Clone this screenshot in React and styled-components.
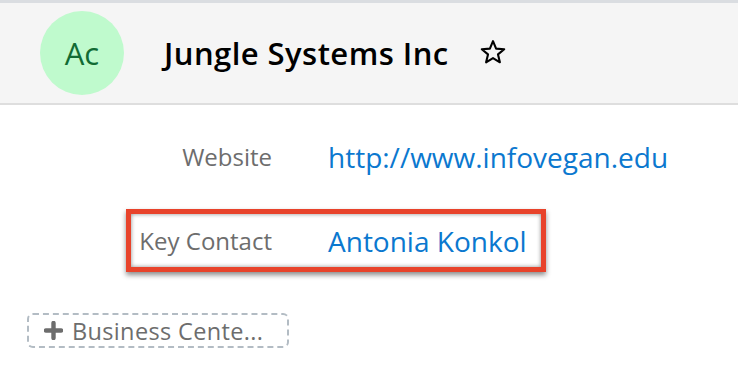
import React from "react";
import styled, { createGlobalStyle } from "styled-components";

const GlobalStyle = createGlobalStyle`
  body {
    margin: 0;
    background: #ffffff;
    font-family: "Open Sans", "Liberation Sans", sans-serif;
  }
`;

const Page = styled.div`
  width: 738px;
  height: 374px;
  overflow: hidden;
  background: #fff;
`;

const Header = styled.header`
  height: 100px;
  display: flex;
  align-items: center;
  padding-left: 40px;
  background: #f5f5f5;
  border-top: 3px solid #dadde1;
  border-bottom: 2px solid #dedede;
`;

const Avatar = styled.div`
  width: 84px;
  height: 84px;
  border-radius: 50%;
  background: #bffacd;
  color: #116b34;
  font-size: 31px;
  display: flex;
  align-items: center;
  justify-content: center;
  flex-shrink: 0;
`;

const Title = styled.h1`
  margin: 0 0 0 40px;
  font-size: 31px;
  font-weight: 600;
  color: #000;
  letter-spacing: 0.45px;
`;

const StarButton = styled.span`
  display: flex;
  margin-left: 30px;
  margin-top: -2px;
`;

const Fields = styled.section`
  display: flex;
  flex-direction: column;
  align-items: flex-start;
  padding: 25px 0 0 131px;
`;

const Row = styled.div`
  display: flex;
  align-items: center;
  height: 53px;
  ${({ $highlight }) =>
    $highlight &&
    `
    margin: 26px 0 0 -5px;
    padding-right: 14px;
    border: 5px solid #e8432b;
    box-shadow: 0 3px 5px rgba(0, 0, 0, 0.45), inset 0 0 4px rgba(0, 0, 0, 0.45);
  `}
`;

const Label = styled.span`
  width: 141px;
  text-align: right;
  font-size: 24px;
  color: #6d6d6d;
`;

const Value = styled.a`
  margin-left: 56px;
  font-size: 28px;
  color: #0b78cf;
  text-decoration: none;
`;

const AddButton = styled.button`
  margin: 41px 0 0 27px;
  width: 262px;
  height: 35px;
  display: flex;
  align-items: center;
  gap: 9px;
  padding: 0 0 0 15px;
  background: #fff;
  border: 2px dashed #b3bcc4;
  border-radius: 6px;
  font-family: "Open Sans", "Liberation Sans", sans-serif;
  font-size: 23.5px;
  letter-spacing: 0.35px;
  color: #6d6d6d;
  white-space: nowrap;
`;

const Star = () => (
  <svg width="28" height="26" viewBox="0 0 28 26">
    <path
      d="M14 2.2 L17.1 9.6 L25.2 10.2 L19 15.4 L20.9 23.3 L14 19.1 L7.1 23.3 L9 15.4 L2.8 10.2 L10.9 9.6 Z"
      fill="none"
      stroke="#000"
      strokeWidth="2.1"
      strokeLinejoin="round"
    />
  </svg>
);

const Plus = () => (
  <svg width="19" height="19" viewBox="0 0 19 19">
    <path d="M9.5 2 V17 M2 9.5 H17" stroke="#6d6d6d" strokeWidth="4.4" strokeLinecap="round" />
  </svg>
);

export default function App() {
  return (
    <Page>
      <GlobalStyle />
      <Header>
        <Avatar>Ac</Avatar>
        <Title>Jungle Systems Inc</Title>
        <StarButton>
          <Star />
        </StarButton>
      </Header>
      <Fields>
        <Row>
          <Label>Website</Label>
          <Value href="#">http://www.infovegan.edu</Value>
        </Row>
        <Row $highlight>
          <Label>Key Contact</Label>
          <Value href="#">Antonia Konkol</Value>
        </Row>
      </Fields>
      <AddButton>
        <Plus />
        Business Cente...
      </AddButton>
    </Page>
  );
}
